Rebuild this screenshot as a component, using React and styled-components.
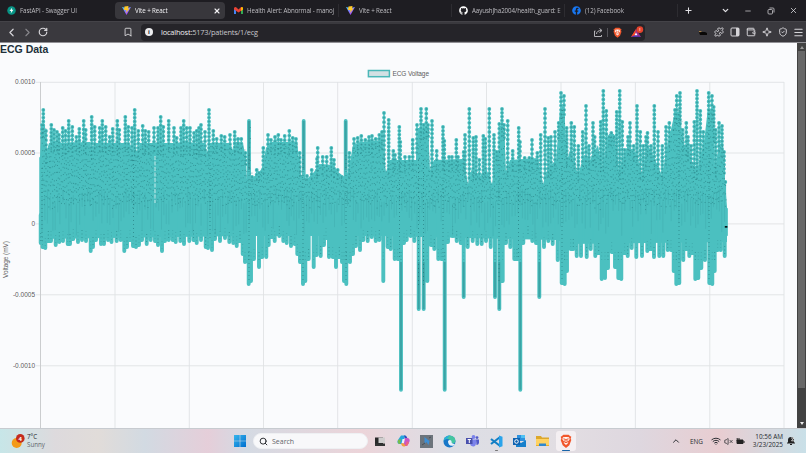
import React from 'react'
import styled, { createGlobalStyle } from 'styled-components'
import {
  ChevronLeft, ChevronRight, ChevronDown, ChevronUp, RotateCw, Bookmark, Plus, X, Minus,
  Puzzle, Wallet, Menu, Search, Wifi, VolumeX, Sparkle, ShieldCheck
} from 'lucide-react'
import { FaGithub, FaFacebook } from 'react-icons/fa'

const tabs = [
  { icon: 'fastapi', label: 'FastAPI - Swagger UI', width: 115 },
  { icon: 'vite', label: 'Vite + React', width: 110, active: true },
  { icon: 'gmail', label: 'Health Alert: Abnormal - manoj', width: 114 },
  { icon: 'vite', label: 'Vite + React', width: 113 },
  { icon: 'github', label: 'AayushJha2004/health_guard: E', width: 113 },
  { icon: 'facebook', label: '(12) Facebook', width: 113 }
]

// highest sample of every beat: x, y
const peaks = [
  43.3,110, 42,125, 46,131, 51.3,125, 54,130, 57,132, 59,135, 62.7,128, 65.5,131, 68.7,121, 72.3,127, 76.3,137,
  79.3,129, 83.7,121, 85.7,130, 91.7,117, 94.7,127, 99.7,128, 102.3,121, 105.7,127, 109.7,137, 112.7,129,
  117.3,121, 119.3,130, 125.3,117, 128.3,127, 132,128, 134.7,110, 138.3,131, 142.7,126, 145.3,131, 148.7,132,
  154,128, 158,128, 160.7,117, 163.3,127, 168.7,121, 174,128, 176.7,138, 181,128, 183.7,121, 186.7,128,
  190,128, 194,133, 196.7,131, 199,128, 201,125, 205,132, 209,110, 213.3,131, 216.7,139, 221.3,136, 224.7,137,
  230,135, 234.7,132, 238,139, 241.3,139, 245.3,153, 252,177, 256.7,170, 259,173, 263.3,148, 268,135,
  271,140, 275,137, 278.3,135, 281,140, 284.7,136, 289.3,131, 292.7,138, 296,139, 299.7,153, 307,176,
  311.7,170, 317.7,148, 317,159, 322.7,157, 326.7,157, 331.3,148, 334,160, 337.7,170, 341.7,177, 349.3,153,
  354,139, 357.7,138, 361.3,136, 365.3,140, 369,137, 372,136, 375.7,139, 379.3,135, 382,132, 384,113,
  388.7,120, 393.3,151, 395,155, 399.3,127, 400.3,142, 405,157, 409.3,157, 412.7,140, 417,125, 421,109,
  423.7,125, 426.3,109, 428,125, 432,121, 436.7,151, 443,127, 444.3,141, 449,157, 452,157, 456.3,140,
  458,157, 463.7,152, 465,135, 469.3,109, 473.3,138, 476,137, 479.3,160, 483.3,136, 485.3,139, 489.3,109,
  494,135, 496.7,152, 499.3,124, 502,109, 504,125, 507.7,121, 512.7,151, 518.7,128, 520,142, 524.7,158,
  529.3,158, 532,140, 537.3,153, 540.7,135, 545,109, 548.3,138, 551,137, 555,132, 558.7,123, 561,93,
  564,96, 566.7,128, 571.3,123, 574.3,127, 578.3,146, 582.7,132, 586,106, 589,146, 593,123, 594.7,137,
  600.7,122, 603.3,91, 606.3,111, 609,137, 611.3,133, 614,137, 616.7,112, 619.7,91, 622.3,122, 624.7,150,
  628,137, 630,123, 633.7,146, 637,106, 640.3,132, 643.3,146, 646,137, 647.5,133, 651,146, 654.3,106,
  658,132, 662.3,146, 666,127, 669.3,123, 673.3,130, 675,110, 676.7,96, 680,93, 682.7,130, 686.3,123,
  688,137, 691,146, 694.3,122, 697,91, 700.3,111, 703.3,132, 706.7,135, 708.7,93, 712,96, 713.7,107,
  715.7,130, 719,123, 722,126, 724,152, 725.3,182
]

// lowest sample of every beat: x, y
const troughs = [
  40.7,243, 42.5,247, 45.3,248, 48.3,241, 51,241, 55.7,245, 59.3,242, 63,241, 67.7,244, 70,244, 73.3,239,
  78,242, 82,240, 86,241, 90.7,251, 93,247, 96,240, 101,244, 104,244, 108,240, 111.5,242, 116.7,241,
  120.7,240, 124.3,251, 127,247, 130,240, 133,246, 136,247, 139,245, 142,240, 146.7,244, 150.7,240, 155,241,
  158,245, 162,251, 165,241, 168.7,240, 172.7,240, 175.7,242, 180.3,241, 184,244, 189.3,241, 193.5,240,
  196.7,243, 201,240, 205.7,247, 208,248, 212,250, 215,239, 220,241, 225,238, 229.3,242, 233.3,243, 236.7,246,
  240,241, 242.7,254, 245,262, 248.7,284, 251,281, 254,259, 259,267, 262.3,257, 266.3,257, 268.7,245,
  271.7,237, 274.7,241, 279.3,236, 283.3,241, 286.7,243, 291,246, 294.7,244, 297.3,254, 300,262, 303,284,
  305.3,281, 308.7,259, 313.7,267, 316.7,255, 320.7,256, 324,245, 326,238, 329,257, 332.7,257, 336,267,
  339.3,257, 342,262, 344,281, 346.3,284, 350,262, 353,254, 356,246, 360,250, 363.3,240, 367.7,241,
  371.7,237, 375.7,241, 379.3,240, 383.3,281, 387.7,247, 390.7,249, 394.7,259, 397.7,259, 401,389.7, 404,243,
  406.7,240, 410.7,236, 414.3,241, 418.7,309, 423.7,309, 427.3,281, 431,245, 434.3,249, 438.3,259, 441.3,259,
  444.7,389.7, 448,242, 452.7,236, 456.7,241, 460.7,243, 463.7,297, 467.7,247, 472.7,241, 477.3,244, 481.7,244,
  486,241, 490.7,247, 495,297, 499.3,309, 502.7,281, 506,243, 510.3,247, 514.3,259, 517,259, 520.3,389.7,
  523.3,243, 528,236, 532.3,241, 536,243, 539.3,297, 544,247, 548.3,241, 552.7,244, 557.7,260, 561.7,283,
  564.7,284, 567,271, 570.7,249, 573.3,249, 576.7,256, 581,256, 586.7,257, 590.7,249, 595.3,256, 598.7,253,
  601.7,279, 605,278, 608,268, 611.7,252, 615,267, 618.3,278, 621.3,279, 624.7,253, 627.7,256, 631.7,248,
  636.3,257, 642,256, 647.3,251, 650.7,249, 654,257, 659.3,256, 663.3,256, 667.7,250, 671,250, 673.7,271,
  676.3,284, 679.3,283, 683.3,260, 686,249, 689.3,256, 692.3,253, 695.3,279, 698.3,278, 701.3,268,
  705,260, 709.3,283, 712.3,284, 714.7,271, 717.7,250, 720.7,250, 724.7,256
]

// outline of the densely sampled part
const crest = [
  40,157, 41,126, 45,126, 46,153, 49,143, 90,142, 92,151, 94,143, 130,143, 132,151, 134,143, 137,152,
  140,143, 205,143, 207,153, 210,143, 230,143, 233,150, 236,142, 243,143, 246,160, 247,180, 249,120, 251,178,
  258,174, 262,168, 266,148, 271,142, 297,142, 301,175, 307,179, 314,172, 319,164, 333,165, 338,172,
  346,178, 349,168, 353,145, 360,142, 382,140, 386,172, 390,160, 416,160, 418,128, 428,128, 430,170,
  434,160, 463,159, 468,184, 472,168, 480,176, 486,168, 492,184, 496,153, 499,150, 500,126, 504,126,
  506,172, 510,160, 538,158, 543,184, 548,168, 556,160, 560,110, 564,104, 567,160, 571,148, 578,175, 584,155,
  590,160, 598,145, 602,168, 609,134, 614,134, 619,170, 628,145, 637,155, 642,175, 648,145, 657,164,
  662,176, 668,142, 675,112, 680,112, 683,143, 688,148, 693,165, 698,168, 704,142, 708,108, 713,112, 715,170,
  719,143, 723,145, 725,181, 727,207
]

const pairs = list => list.reduce((acc, v, i) => (i % 2 ? acc : [...acc, [v, list[i + 1]]]), [])

const peakPoints = pairs(peaks)
const troughPoints = pairs(troughs)
const crestPoints = pairs(crest)

function crestAt(x) {
  const i = Math.max(1, crestPoints.findIndex(p => p[0] >= x))
  const [x0, y0] = crestPoints[i - 1]
  const [x1, y1] = crestPoints[i]
  return y0 + ((x - x0) / (x1 - x0)) * (y1 - y0)
}

let seed = 7
function random() {
  seed = (seed * 16807) % 2147483647
  return seed / 2147483647
}

const area = 'M' + crestPoints.map(p => p.join(' ')).join('L') + 'L727 242L570 244L556 240L380 236L245 236L40 239Z'
const spikes = peakPoints.map(([x, y]) => `M${x} ${y}V200`).join('')
const beads = peakPoints.map(([x, y], i) => {
  let d = ''
  const end = Math.min(crestAt(x) + 12, 182)
  for (let cy = y; cy <= end; cy += 3.8 + (i % 3) * 0.4) d += `M${x} ${cy.toFixed(1)}h.01`
  return d
}).join('')
const drops = troughPoints.map(([x, y]) => `M${x} 215V${y}`).join('')
const deepDrops = troughPoints.filter(p => p[1] > 288)

const specks = (() => {
  let d = ''
  for (let x = 41.5; x < 725; x += 1.7) {
    const top = crestAt(x) + 2
    const limit = 198 + random() * 12
    for (let y = top + random() * 5; y < limit; y += 3.5 + random() * 5) {
      d += `M${(x + random()).toFixed(1)} ${y.toFixed(1)}h1`
    }
  }
  return d
})()
const streaks = (() => {
  let d = ''
  for (let x = 42; x < 725; x += 2.2 + random()) {
    const y = 188 + random() * 17
    d += `M${x.toFixed(1)} ${y.toFixed(1)}v${(9 + random() * 26).toFixed(1)}`
  }
  return d
})()

const gridX = [40.5, 115, 189.3, 263.5, 337.7, 412.3, 486.5, 561, 635.4, 709.8, 784]
const gridY = [
  { y: 82.3, label: '0.0010' },
  { y: 153, label: '0.0005' },
  { y: 223.9, label: '0' },
  { y: 294.8, label: '-0.0005' },
  { y: 365.8, label: '-0.0010' }
]

export default function App() {
  return (
    <Window>
      <GlobalStyle />
      <TabBar>
        {tabs.map((tab, i) => (
          <Tab key={i} $width={tab.width} $active={tab.active} $divider={i > 1}>
            <TabIcon name={tab.icon} />
            <TabLabel>{tab.label}</TabLabel>
            {tab.active && <X size={8} strokeWidth={3.4} />}
          </Tab>
        ))}
        <NewTab><Plus size={9} strokeWidth={2.8} /></NewTab>
        <WindowButtons>
          <ChevronDown size={9} strokeWidth={3.4} />
          <Minus size={8} />
          <RestoreIcon />
          <X size={9} />
        </WindowButtons>
      </TabBar>

      <Toolbar>
        <Cell $width={22}><ChevronLeft size={13} strokeWidth={2.2} /></Cell>
        <Cell $width={10} $dim><ChevronRight size={13} /></Cell>
        <Cell $width={22}><RotateCw size={10} strokeWidth={2.9} /></Cell>
        <BookmarkCell><Bookmark size={10} strokeWidth={2.2} /></BookmarkCell>
        <AddressBar>
          <Info>i</Info>
          <Url>localhost:<span>5173/patients/1/ecg</span></Url>
          <ShareIcon />
          <Separator />
          <BraveIcon width="9" height="11" />
          <RewardsIcon />
        </AddressBar>
        <Extensions>
          <Cell $width={16}>
            <svg width="10" height="8" viewBox="0 0 10 8">
              <path d="M1 4h6l2 1v2H2z" fill="#090807" />
              <path d="M1 3.6h2.4" stroke="#b28848" />
            </svg>
          </Cell>
          <Cell $width={16}><Puzzle size={10} strokeWidth={2.3} /></Cell>
          <Cell $width={16}>
            <svg width="10" height="10" viewBox="0 0 10 10">
              <rect x="1" y="1" width="8" height="8" rx="1" fill="none" stroke="currentColor" />
              <path d="M6 1h3v8H6z" fill="currentColor" />
            </svg>
          </Cell>
          <Cell $width={16}><Wallet size={10} strokeWidth={2.3} /></Cell>
          <Cell $width={16}><Sparkle size={10} strokeWidth={2.3} /></Cell>
          <Cell $width={16}><ShieldCheck size={10} strokeWidth={2.3} /></Cell>
          <Cell $width={15}><Menu size={11} strokeWidth={2.2} /></Cell>
        </Extensions>
      </Toolbar>

      <Viewport>
        <Page>
          <Heading>ECG Data</Heading>
          <EcgChart />
        </Page>
        <Scrollbar>
          <Arrow $up />
          <Thumb />
          <Arrow />
        </Scrollbar>
      </Viewport>

      <Taskbar>
        <Weather>
          <svg width="15" height="17" viewBox="0 0 15 17">
            <circle cx="5.7" cy="10" r="5" fill="#f49a18" />
            <circle cx="9.3" cy="5.4" r="4.3" fill="#c42b1c" />
            <text x="9.3" y="7.5" textAnchor="middle" fontSize="6" fontWeight="700" fill="#fff">4</text>
          </svg>
          <div>
            <p>7°C</p>
            <small>Sunny</small>
          </div>
        </Weather>
        <StartIcon />
        <SearchBox><Search size={9} strokeWidth={2.6} /><span>Search</span></SearchBox>
        <Apps>
          <AppButton><TaskViewIcon /></AppButton>
          <AppButton><CopilotIcon /></AppButton>
          <AppButton><PhoneIcon /></AppButton>
          <AppButton><EdgeIcon /></AppButton>
          <AppButton><TeamsIcon /></AppButton>
          <AppButton $mark="#777"><CodeIcon /></AppButton>
          <AppButton><OutlookIcon /></AppButton>
          <AppButton><FolderIcon /></AppButton>
          <AppButton $focused $mark="#1764a8"><BraveIcon width="12" height="14" /></AppButton>
        </Apps>
        <Tray>
          <Cell $width={18}><ChevronUp size={10} strokeWidth={2.3} /></Cell>
          <Cell $width={23}><Lang>ENG</Lang></Cell>
          <Cell $width={15}><Wifi size={10} strokeWidth={2.3} /></Cell>
          <Cell $width={10}><VolumeX size={9} /></Cell>
          <Cell $width={15}>
            <svg width="9" height="8" viewBox="0 0 9 8">
              <path d="M1 3h6v3.5H1z" fill="#222" stroke="#222" />
              <path d="M8 4v2M1.2 1v3M3 1v3" stroke="#222" />
            </svg>
          </Cell>
          <Clock>
            <p>10:56 AM</p>
            <p>3/23/2025</p>
          </Clock>
          <Cell $width={16}>
            <svg width="10" height="10" viewBox="0 0 10 10">
              <path d="M1 7.5V7l1-1V4a3 3 0 0 1 6 0v2l1 1v.5zM4 8h2v1H4z" fill="#222" />
              <path d="M5 2h3L5.5 4.8H8" fill="none" stroke="#ddd" strokeWidth=".9" />
            </svg>
          </Cell>
        </Tray>
      </Taskbar>
    </Window>
  )
}

function EcgChart() {
  return (
    <Chart viewBox="0 56 797 372" width="797" height="372">
      <g stroke="#e0e2e4" strokeWidth=".9">
        {gridX.map(x => <path key={x} d={`M${x} 82V428`} />)}
        {gridY.map(g => <path key={g.y} d={`M36 ${g.y}H784`} />)}
      </g>
      <path d="M40.5 82V428" stroke="#cbcdcf" />
      <rect x="368.4" y="70.5" width="21" height="6.2" fill="#d3e0e3" stroke="#4bb7b8" strokeWidth="1.5" />
      <text x="392.5" y="75.7" textLength="36.5">ECG Voltage</text>
      {gridY.map(g => <text key={g.label} x="35" y={g.y + 2} textAnchor="end">{g.label}</text>)}
      <text transform="translate(7.7 259.5) rotate(-90)" textAnchor="middle" textLength="37">Voltage (mV)</text>

      <g fill="none" stroke="#4bc0c0" strokeLinecap="round">
        <path d={area} fill="#4bc0c0" stroke="none" />
        <path d={spikes} strokeWidth="1.6" />
        <path d={beads} strokeWidth="3.8" />
        <path d={drops} strokeWidth="3.9" />
        <path d="M249 121V220M303.7 121V220M345.7 121V220" strokeWidth="3.8" />
        <path d="M40.5 158V243" strokeWidth="2.5" />
        <path d="M726.6 209V235" strokeWidth="2.5" />
      </g>
      <g fill="none" stroke="#277f83">
        <path d={beads} stroke="#2b8c90" strokeWidth="1.8" strokeLinecap="round" opacity=".6" />
        <path d={specks} strokeWidth="1" opacity=".62" />
        <path d={streaks} strokeWidth=".5" opacity=".3" />
        <path d="M249 121V170M303.7 121V170M345.7 121V170" strokeWidth="2" opacity=".45" />
        {deepDrops.map(([x, y]) => (
          <path key={x} d={`M${x} 262V${y}`} strokeWidth="1.8" opacity=".45" />
        ))}
        <path
          d="M42 168V244M133.5 160V240M210 165V240M249 155V282M303 155V280M346 155V282M399.5 180V260M418.5 160V285M423.5 160V285M443 180V260M499 160V282M518.5 180V260M562 110V282M679 110V280M709 110V282"
          stroke="#155d62"
          strokeWidth=".8"
          strokeDasharray="1 3"
          opacity=".6"
        />
        {troughPoints.map(([x, y], i) => (
          <path
            key={i}
            d={`M${x} ${Math.min(y, 262) - 10}V${Math.min(y, 262)}`}
            strokeWidth=".9"
            strokeDasharray="1 2.5"
            opacity={i % 3 ? 0.3 : 0.7}
          />
        ))}
      </g>
      <path d="M155 156V203" stroke="#d5f0f1" strokeWidth=".9" strokeDasharray="4 1.5" />
      <rect x="724.8" y="226" width="2.6" height="1.7" fill="#061719" />
    </Chart>
  )
}

function TabIcon({ name }) {
  if (name === 'github') return <FaGithub size={9} color="#fff" />
  if (name === 'facebook') return <FaFacebook size={9} color="#1877f2" />
  if (name === 'fastapi') {
    return (
      <svg width="9" height="9" viewBox="0 0 18 18">
        <circle cx="9" cy="9" r="8.5" fill="#079485" />
        <path d="M10.5 3L5 10h3.4l-1 5 5.6-7.3H9.6z" fill="#fff" />
      </svg>
    )
  }
  if (name === 'gmail') {
    return (
      <svg width="9" height="7" viewBox="0 0 18 14">
        <path d="M0 3v11h4V6z" fill="#4285f4" />
        <path d="M14 6v8h4V3z" fill="#34a853" />
        <path d="M0 2Q2-1 5 1l4 4 4-4q3-2 5 1v3l-9 6-9-6z" fill="#ea4335" />
        <path d="M14 1q3-2 4 1v3l-4 3z" fill="#fbbc04" />
      </svg>
    )
  }
  return (
    <svg width="9" height="9" viewBox="0 0 18 18">
      <defs>
        <linearGradient id="vite" x1="0" y1="0" x2=".7" y2="1">
          <stop offset="0" stopColor="#41d1ff" />
          <stop offset="1" stopColor="#bd34fe" />
        </linearGradient>
      </defs>
      <path d="M0 2l9 2 9-2-9 16z" fill="url(#vite)" />
      <path d="M5 1l8-1-1 5h3l-7 9 1-6H4z" fill="#ffc928" />
    </svg>
  )
}

function BraveIcon(props) {
  return (
    <svg {...props} viewBox="0 0 18 21">
      <path d="M5 1h8l2 2 2 1-1 3 1 2-3 8-5 4-5-4-3-8 1-2-1-3 2-1z" fill="#f1562b" />
      <path d="M4.5 5L9 4.400 13.500 5l1 3-3 3.500 1 1.500L9 16.500 5.500 13l1-1.500-3-3.500z" fill="#fff" />
      <path d="M5 7l3 1-1 4 2 1 2-1-1-4 3-1" fill="none" stroke="#f1562b" strokeWidth="1.6" />
    </svg>
  )
}

const RestoreIcon = () => (
  <svg width="8" height="8" viewBox="0 0 8 8" fill="none" stroke="#b9b8bc" strokeWidth=".9">
    <rect x="1" y="2.5" width="4.500" height="4.500" rx="1" />
    <path d="M2.500 1H6q1 0 1 1v3.500" />
  </svg>
)

const ShareIcon = () => (
  <svg width="9" height="9" viewBox="0 0 18 18" fill="none" stroke="#c4c3c7" strokeWidth="1.8">
    <path d="M3 6H1v11h14v-3M5 12c0-5 4-7 10-7M11 1l5 4-5 4" />
  </svg>
)

const RewardsIcon = () => (
  <svg width="14" height="13" viewBox="0 0 14 13">
    <path d="M6 3L1 11h10z" fill="#9d2b8a" />
    <path d="M6 3L1 11l4-2z" fill="#ff4b1f" />
    <path d="M1 11h10L6 8.7z" fill="#5631a5" />
    <path d="M6 6.5l1.5 2.7h-3z" fill="#fff" />
    <circle cx="9.8" cy="3.6" r="3.4" fill="#e5432d" />
    <path d="M9.8 2v3" stroke="#ffc4b8" strokeWidth=".8" />
  </svg>
)

const StartIcon = () => (
  <svg width="12" height="12" viewBox="0 0 12 12">
    <defs>
      <linearGradient id="start" x2="1" y2="1">
        <stop stopColor="#36b5ec" />
        <stop offset="1" stopColor="#006fcf" />
      </linearGradient>
    </defs>
    <path d="M0 0h5.7v5.7H0zM6.3 0H12v5.7H6.3zM0 6.3h5.7V12H0zM6.3 6.3H12V12H6.3z" fill="url(#start)" />
  </svg>
)

const TaskViewIcon = () => (
  <svg width="11" height="11" viewBox="0 0 11 11">
    <path d="M0 1.500h8V10H0z" fill="#292929" />
    <path d="M3.500 1.500H10v5.500H3.500z" fill="#cfcdcd" />
    <path d="M0 7.500h10V10H0z" fill="#333" />
  </svg>
)

const CopilotIcon = () => (
  <svg width="13" height="12" viewBox="0 0 13 12">
    <path d="M4 .5h4L6 8 4.5 9H2Q-.5 8 1 5z" fill="#25a6de" />
    <path d="M1 5l3-1-1 5Q0 9 1 5z" fill="#75bd4b" />
    <path d="M7 .5h1.5Q10 1 10.5 4L8 4z" fill="#254fc0" />
    <path d="M8 3h3q2.5 1 1.3 4L10 11H6L7.5 4z" fill="#c657c7" />
    <path d="M4 8l3 .5L8.5 11Q5 13 4 8z" fill="#f2a13d" />
    <path d="M10 6l2 2-2 3H8z" fill="#ef637c" />
    <path d="M5.5 4h2.2L7 8H4.7z" fill="#eef2f7" />
  </svg>
)

const PhoneIcon = () => (
  <svg width="13" height="13" viewBox="0 0 13 13">
    <path d="M0 0h13v13H0z" fill="#6c747c" />
    <path d="M4.5 2v7l2-2 2 3 1-4z" fill="#3d8ed4" />
    <path d="M2 10l3-2M9 3l2-1" stroke="#4a4f57" />
  </svg>
)

const EdgeIcon = () => (
  <svg width="13" height="13" viewBox="0 0 13 13">
    <circle cx="6.5" cy="6.5" r="6" fill="#1877c8" />
    <path d="M.6 6Q1 1 6.5.5q5.5.3 6 5.5-.5 3-4 2.5Q8 4 4 4 1 4 .6 6z" fill="#43c6a0" />
    <path d="M.6 6Q1 1 6.5.5L4 4Q1 4 .6 6z" fill="#29aedb" />
    <path d="M5 6q2-2 3.5 0-.5 3 3.5 3l-1 1.5Q5 12 5 6z" fill="#e8f4fa" />
  </svg>
)

const TeamsIcon = () => (
  <svg width="13" height="12" viewBox="0 0 13 12">
    <circle cx="7.5" cy="2" r="1.9" fill="#7b83eb" />
    <circle cx="11" cy="2.6" r="1.4" fill="#5059c9" />
    <path d="M4 4.5h6v4Q9.5 12 7 11.5 4 11 4 8z" fill="#7b83eb" />
    <path d="M10 4.5h3V8q-.5 2-2.5 2z" fill="#5059c9" />
    <path d="M0 3h6.5v6H0z" fill="#4850ad" />
    <path d="M1.7 4.5h3.2M3.3 4.5V8" stroke="#fff" />
  </svg>
)

const CodeIcon = () => (
  <svg width="13" height="13" viewBox="0 0 13 13">
    <path d="M9.5 2.5L1 9M9.5 10.5L1 4" stroke="#137fc5" strokeWidth="2.2" />
    <path d="M9 .5l3.5 1.3v9.4L9 12.5z" fill="#29a3eb" />
  </svg>
)

const OutlookIcon = () => (
  <svg width="13" height="12" viewBox="0 0 13 12">
    <path d="M4 0h8v6H4z" fill="#2c91df" />
    <path d="M8 0h4v3H8z" fill="#50c1f3" />
    <path d="M3 5l5 3 5-3v7H3z" fill="#1780cc" />
    <path d="M0 3h7v7H0z" fill="#1062b0" />
    <circle cx="3.5" cy="6.5" r="1.8" fill="none" stroke="#fff" />
  </svg>
)

const FolderIcon = () => (
  <svg width="13" height="12" viewBox="0 0 13 12">
    <path d="M0 1h5l1 1.5h7V11H0z" fill="#dca72b" />
    <path d="M0 4h13v6H0z" fill="#ffd261" />
    <path d="M3 8.5h7V11H3z" fill="#2f88ce" />
    <path d="M0 10h3v1H0zM10 10h3v1h-3z" fill="#e7ae30" />
  </svg>
)

const GlobalStyle = createGlobalStyle`
*{
  box-sizing: border-box;
}
body{
  margin: 0;
  overflow: hidden;
}
p{
  margin: 0;
}
svg{
  flex-shrink: 0;
}
`

const Window = styled.div`
display: flex;
flex-direction: column;
width: 806px;
height: 453px;
background: #fafbfd;
font-family: 'Open Sans', 'Noto Sans', sans-serif;
`

const TabBar = styled.div`
display: flex;
align-items: center;
height: 21px;
background: #1e1d22;
color: #e2e1e5;
`

const Tab = styled.div`
display: flex;
align-items: center;
gap: 4px;
width: ${p => p.$width}px;
height: ${p => (p.$active ? 17 : 13)}px;
padding: 0 4px 0 7px;
border-radius: ${p => (p.$active ? 4 : 0)}px;
background: ${p => (p.$active ? '#38373c' : 'transparent')};
color: ${p => (p.$active ? '#f3f2f5' : '#bebdc2')};
border-right: ${p => (p.$divider ? '1px solid #2d2c31' : '0')};
&:nth-child(3){
  padding-left: 9px;
}
&:nth-child(3), &:nth-child(5){
  padding-right: 1px;
}
`

const TabLabel = styled.span`
flex: 1;
overflow: hidden;
white-space: nowrap;
font-size: 6.2px;
line-height: 11px;
letter-spacing: -0.08px;
mask-image: linear-gradient(90deg, #000 86px, transparent 94px);
`

const NewTab = styled.div`
display: flex;
justify-content: center;
width: 20px;
`

const WindowButtons = styled.div`
display: flex;
align-items: center;
gap: 14.5px;
margin: 0 8px 0 auto;
`

const Toolbar = styled.div`
display: flex;
align-items: center;
height: 22px;
background: #3a393e;
border-top: 1px solid #444348;
border-bottom: 1px solid #929196;
color: #d5d4d8;
`

const Cell = styled.div`
display: flex;
align-items: center;
justify-content: center;
width: ${p => p.$width}px;
opacity: ${p => (p.$dim ? 0.5 : 1)};
`

const BookmarkCell = styled(Cell)`
width: 26px;
margin-left: 61px;
`

const AddressBar = styled.div`
display: flex;
align-items: center;
width: 504px;
height: 17px;
padding: 0 1px 0 4px;
border-radius: 4px;
background: #252429;
`

const Info = styled.span`
width: 8px;
height: 8px;
border-radius: 50%;
background: #ececef;
color: #252429;
font-size: 6px;
font-weight: 700;
line-height: 8px;
text-align: center;
`

const Url = styled.span`
flex: 1;
margin-left: 8px;
color: #f0eff2;
font-size: 7.4px;
letter-spacing: -0.17px;
span{
  color: #c8c7cc;
}
`

const Separator = styled.span`
width: 1px;
height: 9px;
margin: 0 5px 0 4px;
background: #55545a;
& + svg{
  margin-right: 8px;
}
`

const Extensions = styled.div`
display: flex;
margin-left: auto;
`

const Viewport = styled.div`
display: flex;
height: 385px;
`

const Page = styled.main`
width: 797px;
`

const Heading = styled.h2`
height: 13px;
margin: 0;
color: #213039;
font: bold 10.5px/13px 'Liberation Sans', Arial, sans-serif;
`

const Chart = styled.svg`
display: block;
font-family: 'Liberation Sans', Arial, sans-serif;
font-size: 6.5px;
text{
  fill: #5c5c5c;
}
`

const Scrollbar = styled.div`
display: flex;
flex-direction: column;
align-items: center;
justify-content: space-between;
width: 9px;
padding: 3px 0;
background: #424242;
`

const Arrow = styled.i`
border: 2.5px solid transparent;
border-top-width: ${p => (p.$up ? 0 : 3)}px;
border-bottom-width: ${p => (p.$up ? 3 : 0)}px;
border-top-color: #eee;
border-bottom-color: #999;
`

const Thumb = styled.div`
width: 7px;
height: 337px;
margin: 2px 0 auto;
background: #686868;
`

const Taskbar = styled.footer`
display: flex;
align-items: center;
height: 25px;
border-top: 1px solid #c7cbd0;
background: linear-gradient(90deg, #c7e6e8 0, #dddadd 55px, #e1dcd9 98px, #d2dae2 145px, #e5ced9 208px, #d4dae3 245px, #ecd4d9 360px, #dcdee5 450px, #e2dde2 570px, #ded7df 640px, #e8cdd1 720px, #c9e0e8 806px);
color: #272a2e;
`

const Weather = styled.div`
display: flex;
align-items: center;
gap: 1px;
width: 234px;
padding-left: 11px;
font-size: 6.2px;
line-height: 8px;
small{
  display: block;
  color: #62656b;
  font-size: 6.2px;
}
`

const SearchBox = styled.div`
display: flex;
align-items: center;
gap: 4px;
width: 115px;
height: 16px;
margin-left: 7px;
padding-left: 5px;
border: 1px solid #eef0f3;
border-radius: 8px;
background: #f8f8fa;
span{
  color: #62646a;
  font-size: 7px;
}
`

const Apps = styled.div`
display: flex;
gap: 3px;
margin-left: 2px;
`

const AppButton = styled.div`
position: relative;
display: flex;
align-items: center;
justify-content: center;
width: 20.2px;
height: 20px;
border-radius: 3px;
background: ${p => (p.$focused ? '#f4eff2' : 'transparent')};
&::after{
  content: '';
  position: absolute;
  bottom: 0;
  width: ${p => (p.$focused ? 8 : 3)}px;
  height: 1.5px;
  border-radius: 1px;
  background: ${p => p.$mark || 'transparent'};
}
`

const Tray = styled.div`
display: flex;
align-items: center;
margin: 0 7px 0 auto;
`

const Lang = styled.span`
font-size: 6.4px;
`

const Clock = styled.div`
width: 35px;
text-align: right;
font-size: 6.4px;
line-height: 8px;
white-space: nowrap;
`
